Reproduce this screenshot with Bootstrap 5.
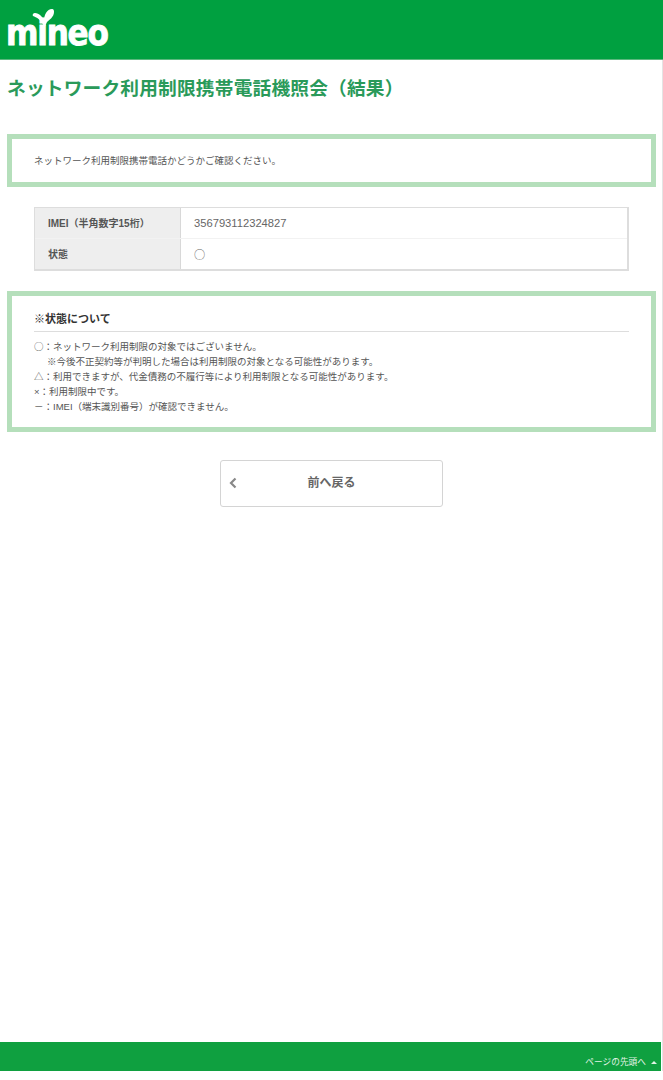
<!DOCTYPE html>
<html lang="ja">
<head>
<meta charset="utf-8">
<title>ネットワーク利用制限携帯電話機照会（結果）</title>
<link href="https://cdn.jsdelivr.net/npm/bootstrap@5.3.0/dist/css/bootstrap.min.css" rel="stylesheet">
<style>
html,body{height:1080px;overflow:hidden;}
body{font-family:"Liberation Sans","Noto Sans CJK JP",sans-serif;color:#555;background:#fff;font-size:9.500px;line-height:15px;}
.pg{height:1071px;border-right:1px solid #e4e4e4;}
.hd{height:60px;background:#00a040;border-bottom:1px solid #5cb87e;padding:20px 0 0 6px;margin-right:-1px;}
.lg{position:relative;width:104px;height:26px;}
.lg-t{font-family:"DejaVu Sans",sans-serif;font-weight:700;font-size:35px;line-height:26px;color:#fff;letter-spacing:-1.4px;display:block;width:116px;transform:scaleX(.89);transform-origin:left center;-webkit-text-stroke:.9px #fff;}
.lg svg{position:absolute;left:25px;top:-12px;}
.ttl{font-size:18.700px;line-height:28px;font-weight:700;color:#2a9a5a;margin:15px 0 0 7px;letter-spacing:.2px;}
.bx{border:5px solid #b5dfbb;margin:0 6px 0 7px;padding:0 22px;}
.bx1{height:53px;margin-top:31px;display:flex;align-items:center;}
.bx2{height:141px;margin-top:20px;padding-top:15px;}
.tb{margin:20px 33px 0 34px;border:1px solid #ddd;border-right-width:2px;border-bottom-width:2px;}
.tb-r{height:30px;display:flex;align-items:center;}
.tb-r + .tb-r{border-top:1px solid #f2f2f2;height:31px;}
.tb-h{width:146px;height:100%;flex:none;background:#eee;border-right:1px solid #d8d8d8;padding-left:13px;font-weight:700;font-size:10px;color:#555;display:flex;align-items:center;}
.tb-d{padding-left:13px;font-size:11.200px;color:#666;}
.cj{font-family:"Noto Sans CJK JP",sans-serif;}
.sub{font-size:11px;font-weight:700;color:#333;line-height:16px;padding-bottom:4px;border-bottom:1px solid #ddd;margin-bottom:7px;}
.ind{padding-left:13px;}
.bk{display:flex;align-items:center;width:223px;height:47px;margin:28px 0 0 220px;position:relative;border:1.500px solid #d4d4d4;border-radius:3px;color:#666;font-size:12px;font-weight:700;text-decoration:none;justify-content:center;background:#fff;}
.bk svg{position:absolute;left:6px;top:15px;}
.ft{height:29px;margin-top:535px;margin-right:1px;background:#0fa040;color:#e2f3e6;font-size:8.700px;line-height:12px;display:flex;justify-content:flex-end;align-items:flex-end;padding:0 4px 3px 0;gap:5px;}
.ft i{display:block;width:0;height:0;border-left:3px solid transparent;border-right:3px solid transparent;border-bottom:3px solid #e2f3e6;margin-bottom:4px;}
</style>
</head>
<body>
<div class="pg">
<header class="hd">
<div class="lg"><span class="lg-t">mineo</span>
<svg width="24" height="20" viewBox="0 0 24 20"><path d="M13 19C11 12 5 9 2 8c-1-1 0-3 2-3 4 0 8 4 9 8 0-6 3-12 8-12 2 0 2 2 2 3 0 5-5 8-7 10-1 2-2 4-2 5z" fill="#fff"/></svg></div>
</header>
<h1 class="ttl">ネットワーク利用制限携帯電話機照会（結果）</h1>
<div class="bx bx1">ネットワーク利用制限携帯電話かどうかご確認ください。</div>
<div class="tb">
<div class="tb-r"><div class="tb-h">IMEI（半角数字15桁）</div><div class="tb-d">356793112324827</div></div>
<div class="tb-r"><div class="tb-h">状態</div><div class="tb-d cj">○</div></div>
</div>
<div class="bx bx2">
<div class="sub">※状態について</div>
<div><span class="cj">○</span>：ネットワーク利用制限の対象ではございません。</div>
<div class="ind">※今後不正契約等が判明した場合は利用制限の対象となる可能性があります。</div>
<div>△：利用できますが、代金債務の不履行等により利用制限となる可能性があります。</div>
<div>×：利用制限中です。</div>
<div>－：IMEI（端末識別番号）が確認できません。</div>
</div>
<a class="bk" href="#"><svg width="12" height="14" viewBox="0 0 12 14"><path d="M8.500 2.500 4 7l4.500 4.500" fill="none" stroke="#888" stroke-width="2.200"/></svg>前へ戻る</a>
<footer class="ft"><span>ページの先頭へ</span><i></i></footer>
</div>
<script src="https://cdn.jsdelivr.net/npm/bootstrap@5.3.0/dist/js/bootstrap.bundle.min.js"></script>
</body>
</html>
